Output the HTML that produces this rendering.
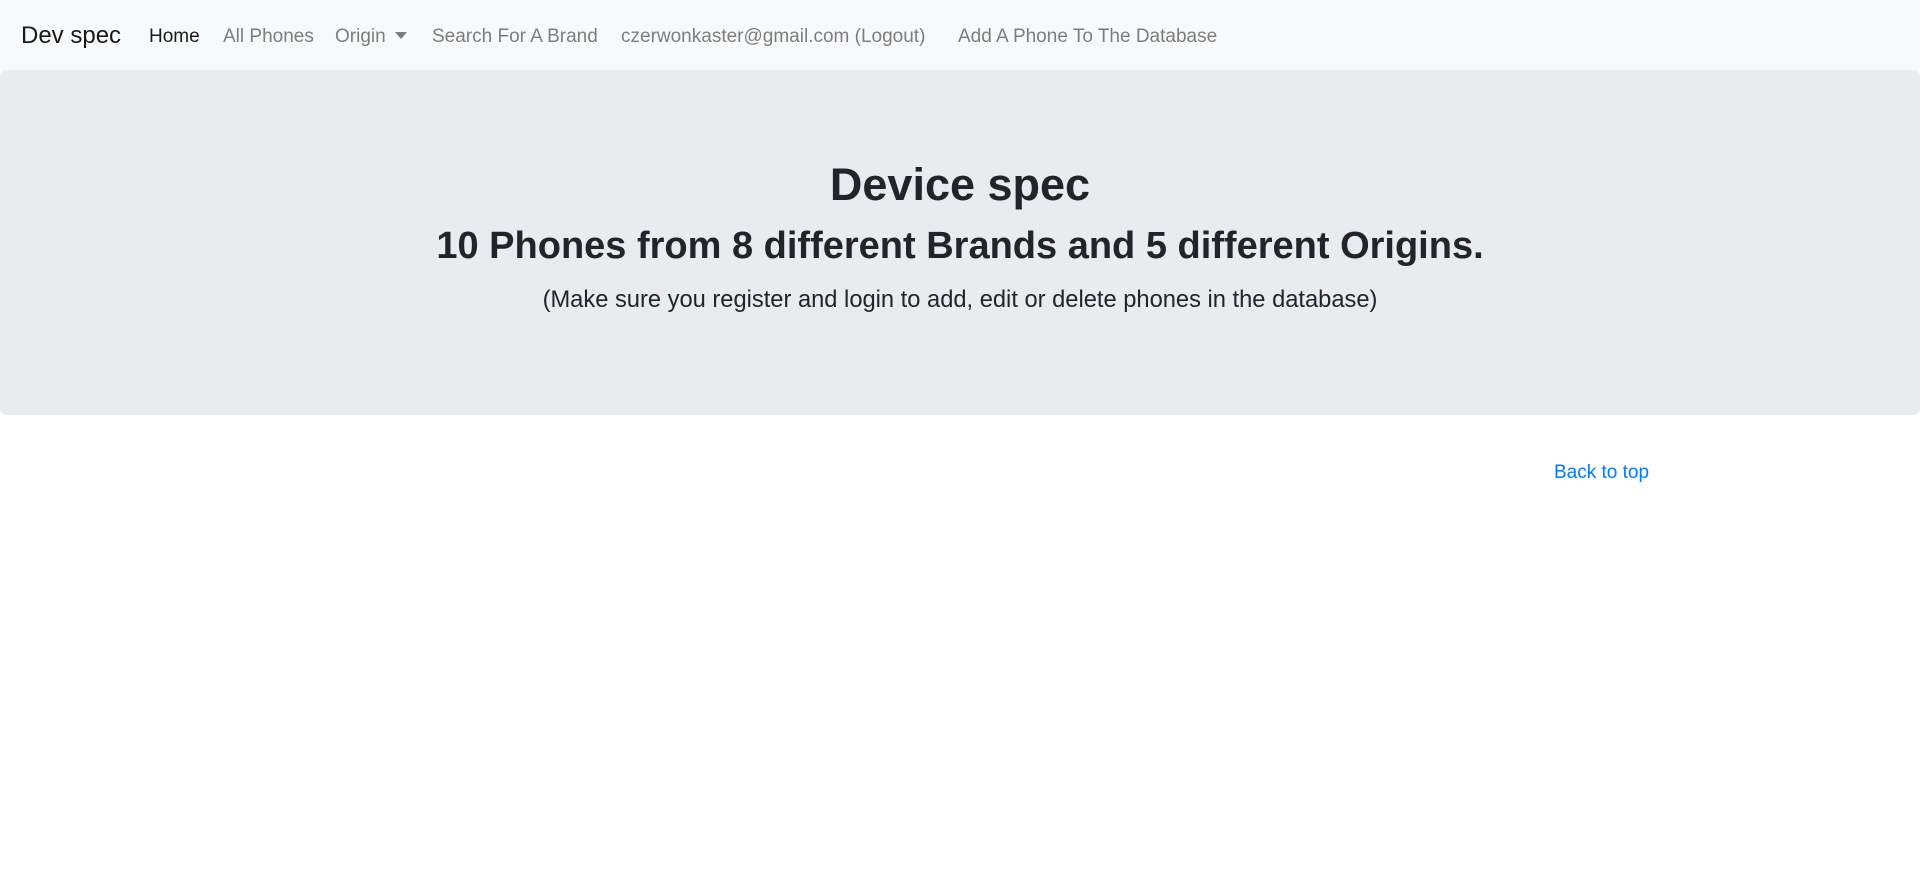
<!DOCTYPE html>
<html><head><meta charset="utf-8"><style>
body{margin:0;width:1920px;height:891px;background:#fff;font-family:"Liberation Sans",sans-serif;overflow:hidden;position:relative}
nav{position:absolute;left:0;top:0;width:1920px;height:70px;background:#f8f9fa}
nav span{position:absolute;top:26px;font-size:19px;color:rgba(0,0,0,.5);white-space:nowrap;line-height:22px}
.brand{font-size:24px!important;color:rgba(0,0,0,.9)!important;top:22px!important;line-height:28px!important}
.jumbo{position:absolute;left:0;top:70px;width:1920px;height:345px;background:#e9ecef;border-radius:6px;text-align:center;color:#212529}
h1{position:absolute;top:85px;left:0;right:0;margin:0;font-size:45px;font-weight:bold;line-height:60px}
h2{position:absolute;top:151px;left:0;right:0;margin:0;font-size:38px;font-weight:bold;line-height:50px}
p{position:absolute;top:214px;left:0;right:0;margin:0;font-size:23.7px;font-weight:300;line-height:32px}
.top{position:absolute;left:1554px;top:462px;font-size:19px;color:#007bff}
</style></head><body>
<nav>
<span class="brand" style="left:21px">Dev spec</span>
<span style="left:149px;color:rgba(0,0,0,.9)">Home</span>
<span style="left:223px">All Phones</span>
<span style="left:335px">Origin <span style="position:static;display:inline-block;width:0;height:0;border-left:6px solid transparent;border-right:6px solid transparent;border-top:7px solid rgba(0,0,0,.5);vertical-align:3px;margin-left:4px"></span></span>
<span style="left:432px">Search For A Brand</span>
<span style="left:621px">czerwonkaster@gmail.com (Logout)</span>
<span style="left:958px">Add A Phone To The Database</span>
</nav>
<div class="jumbo">
<h1>Device spec</h1>
<h2>10 Phones from 8 different Brands and 5 different Origins.</h2>
<p>(Make sure you register and login to add, edit or delete phones in the database)</p>
</div>
<div class="top">Back to top</div>
</body></html>
